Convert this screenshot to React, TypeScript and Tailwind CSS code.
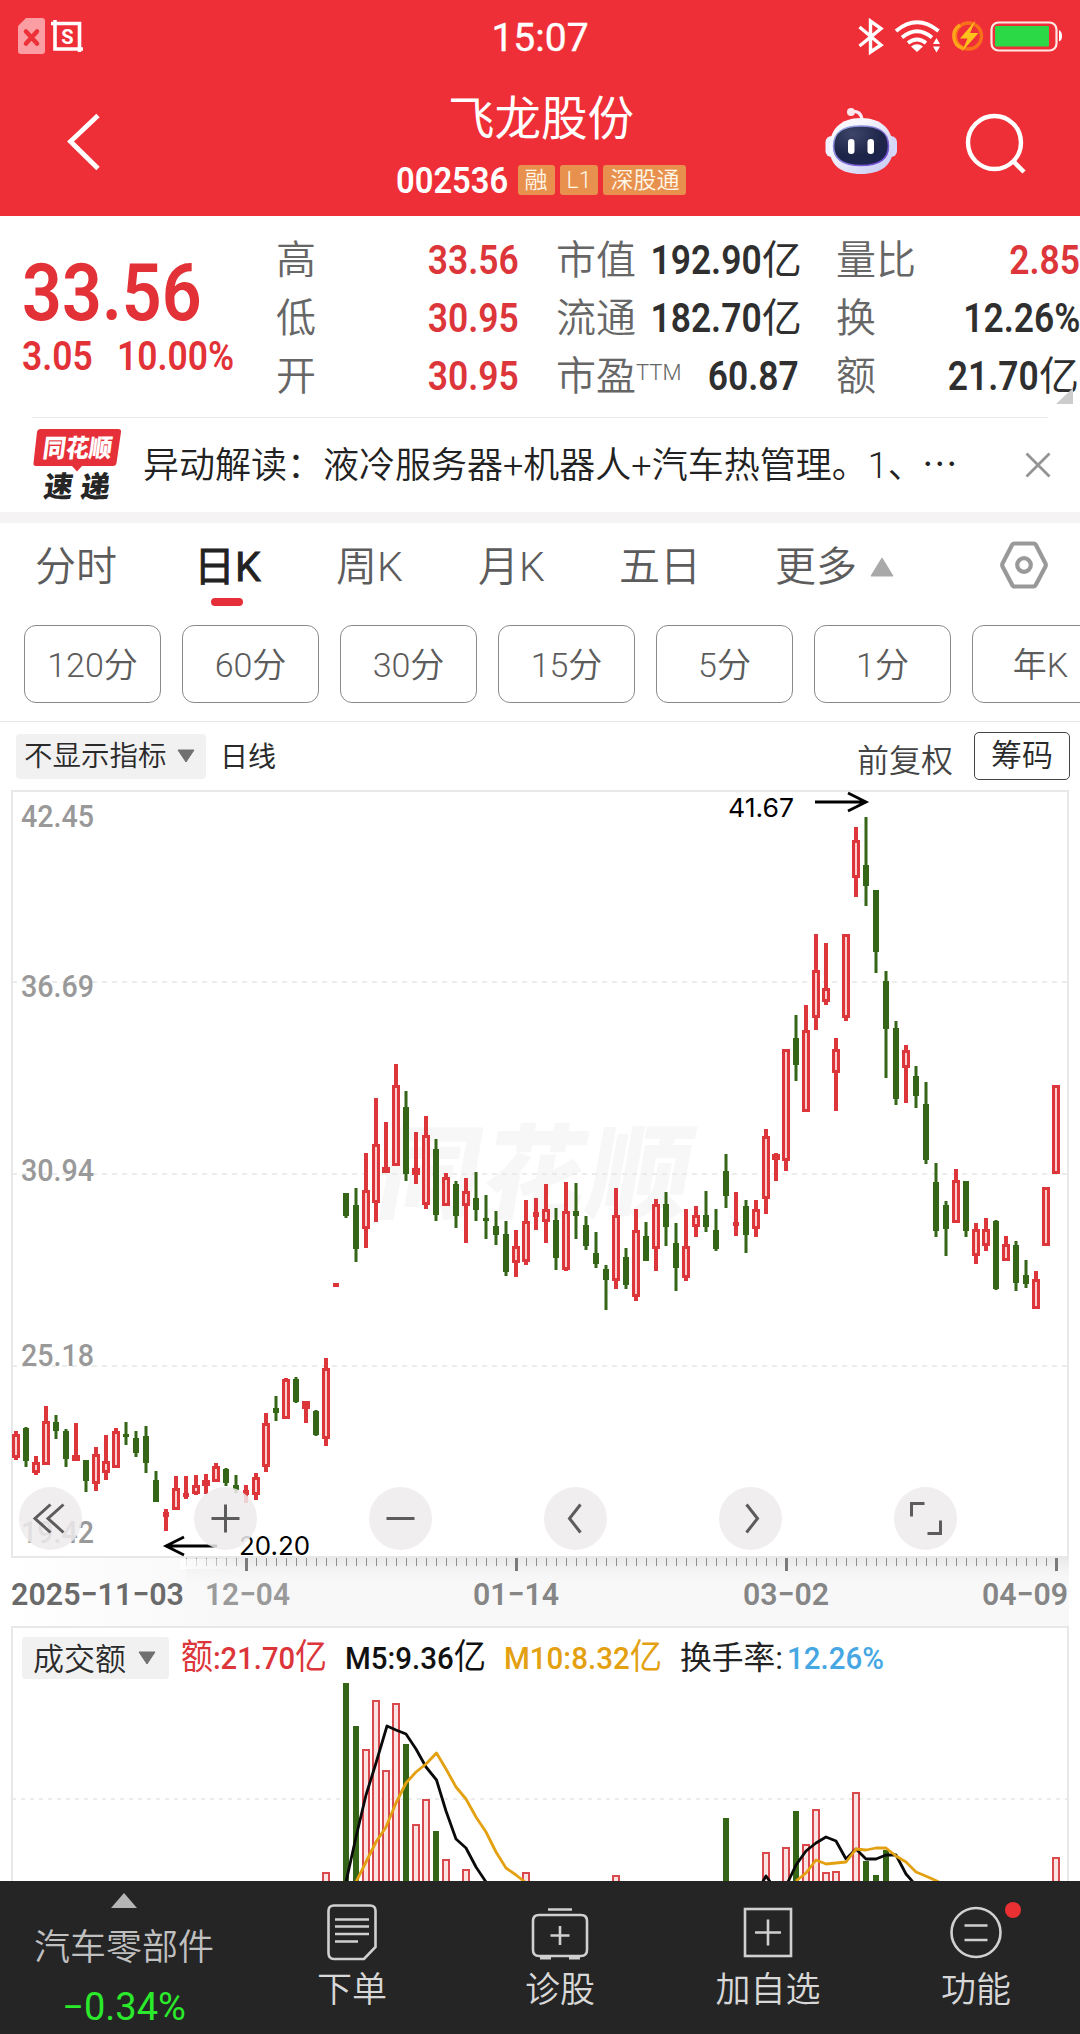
import type { ReactNode } from "react";

type Candle = ["r" | "g", number, number, number, number];

// direction, high, body top, body bottom, low (chart units)
const CANDLES: Candle[] = [
  ["r", 1431, 1434, 1458, 1460], ["g", 1427, 1428, 1461, 1467], ["r", 1456, 1462, 1473, 1475],
  ["r", 1406, 1421, 1465, 1465], ["g", 1415, 1422, 1431, 1439], ["g", 1429, 1431, 1459, 1467],
  ["r", 1423, 1455, 1461, 1461], ["g", 1460, 1460, 1481, 1492], ["r", 1447, 1454, 1484, 1491],
  ["r", 1435, 1461, 1473, 1480], ["r", 1428, 1431, 1468, 1468], ["g", 1422, 1434, 1437, 1445],
  ["g", 1431, 1438, 1453, 1457], ["g", 1426, 1436, 1463, 1473], ["g", 1471, 1480, 1502, 1502],
  ["r", 1509, 1512, 1517, 1531], ["r", 1476, 1488, 1510, 1510], ["r", 1476, 1493, 1497, 1499],
  ["r", 1475, 1485, 1494, 1495], ["r", 1474, 1480, 1486, 1494], ["r", 1463, 1466, 1482, 1482],
  ["g", 1468, 1469, 1483, 1486], ["g", 1475, 1485, 1490, 1493], ["r", 1485, 1490, 1495, 1503],
  ["r", 1473, 1477, 1495, 1500], ["r", 1413, 1423, 1467, 1472], ["g", 1396, 1408, 1413, 1421],
  ["r", 1378, 1379, 1419, 1419], ["g", 1377, 1379, 1402, 1403], ["r", 1401, 1401, 1409, 1423],
  ["g", 1410, 1411, 1435, 1436], ["r", 1358, 1368, 1439, 1446], ["r", 1283, 1283, 1287, 1287],
  ["g", 1193, 1193, 1216, 1218], ["g", 1188, 1205, 1249, 1262], ["r", 1153, 1190, 1229, 1248],
  ["r", 1098, 1144, 1203, 1222], ["r", 1122, 1167, 1173, 1173], ["r", 1064, 1085, 1166, 1166],
  ["g", 1091, 1107, 1174, 1181], ["r", 1132, 1168, 1175, 1184], ["r", 1116, 1135, 1205, 1209],
  ["g", 1139, 1149, 1215, 1221], ["r", 1173, 1177, 1206, 1206], ["g", 1181, 1184, 1216, 1228],
  ["r", 1178, 1191, 1206, 1243], ["g", 1172, 1198, 1210, 1221], ["g", 1195, 1218, 1221, 1239],
  ["g", 1211, 1226, 1235, 1245], ["g", 1221, 1234, 1272, 1276], ["r", 1230, 1246, 1263, 1277],
  ["r", 1200, 1221, 1262, 1265], ["r", 1198, 1212, 1217, 1230], ["r", 1184, 1209, 1222, 1243],
  ["g", 1208, 1220, 1258, 1270], ["r", 1182, 1211, 1270, 1271], ["g", 1183, 1211, 1216, 1239],
  ["g", 1216, 1225, 1246, 1250], ["g", 1232, 1253, 1264, 1268], ["g", 1265, 1269, 1280, 1310],
  ["r", 1188, 1215, 1281, 1289], ["g", 1248, 1257, 1285, 1289], ["r", 1209, 1230, 1297, 1301],
  ["g", 1222, 1236, 1261, 1261], ["r", 1199, 1204, 1249, 1271], ["g", 1192, 1204, 1227, 1246],
  ["g", 1223, 1243, 1268, 1291], ["r", 1209, 1246, 1278, 1281], ["r", 1206, 1215, 1227, 1237],
  ["g", 1191, 1215, 1227, 1232], ["g", 1209, 1230, 1249, 1251], ["g", 1154, 1171, 1196, 1208],
  ["r", 1192, 1222, 1226, 1236], ["g", 1200, 1206, 1235, 1253], ["r", 1200, 1209, 1229, 1237],
  ["r", 1129, 1136, 1199, 1214], ["r", 1153, 1154, 1160, 1181], ["r", 1049, 1049, 1161, 1171],
  ["g", 1015, 1038, 1065, 1081], ["r", 1005, 1030, 1112, 1112], ["r", 934, 970, 1018, 1030],
  ["r", 943, 988, 1002, 1005], ["r", 1038, 1049, 1073, 1111], ["r", 934, 934, 1018, 1021],
  ["r", 827, 840, 878, 897], ["g", 817, 865, 886, 906], ["g", 890, 890, 952, 973],
  ["g", 971, 981, 1029, 1078], ["g", 1021, 1028, 1099, 1105], ["r", 1045, 1050, 1068, 1103],
  ["g", 1066, 1076, 1096, 1108], ["g", 1082, 1104, 1160, 1164], ["g", 1163, 1182, 1231, 1237],
  ["g", 1201, 1205, 1229, 1256], ["r", 1169, 1180, 1223, 1223], ["g", 1181, 1181, 1231, 1237],
  ["r", 1223, 1229, 1256, 1264], ["r", 1218, 1229, 1246, 1251], ["g", 1220, 1221, 1289, 1290],
  ["r", 1236, 1244, 1261, 1261], ["g", 1241, 1245, 1283, 1291], ["g", 1260, 1275, 1284, 1288],
  ["r", 1271, 1279, 1309, 1309], ["r", 1187, 1187, 1246, 1246], ["r", 1085, 1085, 1174, 1174],
];

const VOLUME: ["r" | "g", number, number][] = [
  ["r", 326, 1872], ["g", 346, 1683], ["g", 356, 1726], ["r", 366, 1749], ["r", 376, 1700],
  ["r", 386, 1770], ["r", 396, 1703], ["g", 406, 1744], ["r", 416, 1824], ["r", 426, 1799],
  ["g", 436, 1831], ["r", 446, 1859], ["r", 466, 1869], ["r", 526, 1872], ["r", 616, 1875],
  ["g", 726, 1818], ["r", 766, 1852], ["r", 786, 1847], ["g", 796, 1811], ["r", 806, 1844],
  ["r", 816, 1809], ["r", 826, 1872], ["r", 836, 1871], ["r", 856, 1792], ["g", 866, 1861],
  ["g", 876, 1875], ["g", 886, 1850], ["r", 1056, 1857],
];

const M5 = [
  "346,1882 356,1837 366,1795 376,1763 387,1726 396,1730 406,1734 416,1749 426,1767 436.500,1780 446,1811 456,1839 466,1848 476,1867 486,1882",
  "762,1883 766,1876 771,1883",
  "788,1882 796,1865 806,1851 816,1843 826,1837 836,1841 846,1859 856,1849 866,1859 876,1859 886,1855 896,1855 906,1874 913,1882",
];
const M10 = [
  "356,1882 366,1862 376,1842 386,1827 396,1803 406,1783 416,1772 426,1764 436.500,1753 446,1769 456,1787 466,1799 476,1817 486,1832 496,1852 506,1868 516,1875 525,1882",
  "796,1881 806,1873 816,1860 826,1864 836,1863 846,1862 856,1849 866,1850 876,1848 886,1848 896,1856 906,1862 916,1872 928,1877 939,1882",
];

const RED = "#dc363a";
const GREEN = "#356516";
const NUM = "Roboto, 'Noto Sans CJK SC', sans-serif";

function CandleMark({ c, x }: { c: Candle; x: number }) {
  const [dir, high, top, bottom, low] = c;
  if (dir === "g") {
    return (
      <g fill={GREEN}>
        <rect x={x - 1.5} y={high} width={3} height={low - high} />
        <rect x={x - 3} y={top} width={6} height={bottom - top} />
      </g>
    );
  }
  const h = bottom - top;
  return (
    <g fill={RED}>
      {high < top && <rect x={x - 2} y={high} width={4} height={top - high} />}
      {low > bottom && <rect x={x - 2} y={bottom} width={4} height={low - bottom} />}
      <rect x={h < 6 ? x - 3 : x - 4} y={top} width={h < 6 ? 6 : 8} height={h} />
      {h > 8 && <rect x={x - 1} y={top + 3} width={2} height={h - 6} fill="#f9cfcf" />}
    </g>
  );
}

function PriceChart() {
  const ticks = Array.from({ length: 88 }, (_, i) => 186 + i * 10);
  return (
    <svg className="block h-[836px] w-[1080px]" viewBox="0 790 1080 836">
      <defs>
        <linearGradient id="axisFade" x1="0" x2="1" y1="0" y2="0">
          <stop offset="0" stopColor="#f7f7f7" stopOpacity="0" />
          <stop offset="0.2" stopColor="#f7f7f7" stopOpacity="0.9" />
          <stop offset="1" stopColor="#f8f8f8" />
        </linearGradient>
        <linearGradient id="axisShade" x1="0" x2="0" y1="0" y2="1">
          <stop offset="0" stopColor="#e9e9e9" />
          <stop offset="1" stopColor="#f8f8f8" stopOpacity="0" />
        </linearGradient>
        <linearGradient id="tickFade" gradientUnits="userSpaceOnUse" x1="180" x2="250" y1="0" y2="0">
          <stop offset="0" stopColor="#fff" stopOpacity="0.85" />
          <stop offset="1" stopColor="#fff" stopOpacity="0" />
        </linearGradient>
      </defs>
      <rect x="12" y="1558" width="1057" height="68" fill="url(#axisFade)" />
      <rect x="186" y="1558" width="883" height="28" fill="url(#axisShade)" />
      <g stroke="#e8e8e8" strokeWidth="2" fill="none">
        <rect x="12" y="791" width="1056" height="766" />
      </g>
      <text x="375" y="1210" fontSize="102" fontWeight="900" fill="#f7f7f7" textLength="312" transform="translate(212 0) skewX(-10)" fontFamily="'Noto Sans CJK SC', sans-serif">同花顺</text>
      <g stroke="#e6e6e6" strokeWidth="1.5" strokeDasharray="5 5">
        <line x1="12" x2="1068" y1="982" y2="982" />
        <line x1="12" x2="1068" y1="1174" y2="1174" />
        <line x1="12" x2="1068" y1="1366" y2="1366" />
      </g>
      <g fontFamily={NUM} fontSize="32" fontWeight="500" fill="#999">
        <text x="21" y="827" textLength="73" lengthAdjust="spacingAndGlyphs">42.45</text>
        <text x="21" y="997" textLength="73" lengthAdjust="spacingAndGlyphs">36.69</text>
        <text x="21" y="1181" textLength="73" lengthAdjust="spacingAndGlyphs">30.94</text>
        <text x="21" y="1366" textLength="73" lengthAdjust="spacingAndGlyphs">25.18</text>
        <text x="21" y="1543" textLength="73" lengthAdjust="spacingAndGlyphs">19.42</text>
      </g>
      {CANDLES.map((c, i) => <CandleMark key={i} c={c} x={16 + i * 10} />)}
      <g stroke="#000" strokeWidth="2.8" fill="none">
        <path d="M815 802H865M848 793L866 802L848 811" />
        <path d="M217 1546H167M184 1537L166 1546L184 1555" />
      </g>
      <g fontFamily="Inter, sans-serif" fontSize="26" fill="#000">
        <text x="728" y="817" textLength="66" lengthAdjust="spacingAndGlyphs">41.67</text>
        <text x="239" y="1555" textLength="71" lengthAdjust="spacingAndGlyphs">20.20</text>
      </g>
      {ticks.map((x) => {
        const major = (x - 246) % 270 === 0;
        return <rect key={x} x={major ? x - 1 : x} y={1558} width={major ? 3 : 1} height={major ? 13 : 8} fill={major ? "#7a7a7a" : "#8f8f8f"} />;
      })}
      <rect x="180" y="1559" width="60" height="10" fill="url(#tickFade)" />
      <g fontFamily={NUM} fontSize="32" fontWeight="600" fill="#868686">
        <text x="11" y="1605" fill="#6a6a6a" textLength="173" lengthAdjust="spacingAndGlyphs">2025−11−03</text>
        <text x="205" y="1605" fill="#9a9a9a" textLength="85" lengthAdjust="spacingAndGlyphs">12−04</text>
        <text x="473" y="1605" textLength="86" lengthAdjust="spacingAndGlyphs">01−14</text>
        <text x="743" y="1605" textLength="86" lengthAdjust="spacingAndGlyphs">03−02</text>
        <text x="982" y="1605" textLength="86" lengthAdjust="spacingAndGlyphs">04−09</text>
      </g>
    </svg>
  );
}

function VolumeChart() {
  return (
    <svg className="block h-[199px] w-[1080px]" viewBox="0 1682 1080 199">
      <path d="M12 1682V1881M1068 1682V1881" stroke="#e8e8e8" strokeWidth="2" />
      <line x1="12" x2="1068" y1="1799" y2="1799" stroke="#e6e6e6" strokeWidth="1.5" strokeDasharray="4 5" />
      {VOLUME.map(([dir, x, y]) =>
        dir === "g" ? (
          <rect key={x} x={x - 3} y={y} width={6} height={1890 - y} fill={GREEN} />
        ) : (
          <rect key={x} x={x - 3} y={y + 1} width={6} height={1890 - y} fill="#fbe3e3" stroke="#d9484c" strokeWidth={2} />
        )
      )}
      <g fill="none" strokeWidth="2.8" strokeLinejoin="round">
        {M5.map((p) => <polyline key={p} points={p} stroke="#0a0a0a" />)}
        {M10.map((p) => <polyline key={p} points={p} stroke="#e3a010" />)}
      </g>
    </svg>
  );
}

function StatusBar() {
  return (
    <div className="relative flex h-[72px] items-center justify-between">
      <svg className="ml-[16px] h-[40px] w-[72px]" viewBox="16 16 72 40" fill="none">
        <path d="M26 18H42Q45 18 45 21V51Q45 54 42 54H21Q18 54 18 51V26Z" fill="#fb9ea3" />
        <path d="M26 31.500L37 43.500M37 31.500L26 43.500" stroke="#ee3038" strokeWidth="4.500" strokeLinecap="round" />
        <path d="M51 23.500H79.500V52M55 20V49H83" stroke="#fff" strokeWidth="3.600" />
        <text x="67.300" y="43.500" textAnchor="middle" fontSize="20" fontWeight="700" fill="#fff" fontFamily="Roboto, sans-serif">S</text>
      </svg>
      <div className="absolute inset-x-0 top-[11px] text-center text-[39px] leading-[54px] text-white [-webkit-text-stroke:0.4px_white]">15:07</div>
      <svg className="mr-[14px] h-[40px] w-[214px]" viewBox="852 16 214 40" fill="none">
        <path d="M859.500 27L881 45L870.500 52V21L881 28.500L859.500 46" stroke="#fff" strokeWidth="3.400" />
        <g stroke="#fff" strokeWidth="3.800">
          <path d="M896 31Q917 13.500 938.500 31" />
          <path d="M902 37.500Q917 25 932 37.500" />
          <path d="M908 43Q917 36 926 43" />
        </g>
        <path d="M911 46.500Q917 42 923 46.500L917 52Z" fill="#fff" />
        <path d="M933 44L936.500 38L940 44ZM933 46.500L936.500 52.500L940 46.500Z" fill="#fff" />
        <circle cx="968.500" cy="36" r="13" stroke="#f8701a" strokeWidth="3.400" />
        <path d="M960 25A13 13 0 0 0 963 48.500" stroke="#ffa51a" strokeWidth="3.400" />
        <path d="M975.500 20.500L960 38.500H967.500L962 51.500L978.500 33H970Z" fill="#ffc21c" />
        <rect x="991.500" y="22.500" width="65" height="28" rx="7" stroke="#ffe9e6" strokeWidth="2.200" />
        <rect x="995" y="26" width="54" height="20.500" rx="1" fill="#2bd846" />
        <path d="M1059 30Q1062 31.500 1062 36T1059 41.500Z" fill="#fff" />
      </svg>
    </div>
  );
}

function Robot() {
  return (
    <svg className="h-[70px] w-[76px]" viewBox="823 107 76 70" fill="none">
      <defs>
        <linearGradient id="shell" x1="0" x2="1" y1="0" y2="1">
          <stop offset="0.3" stopColor="#f7f7fd" />
          <stop offset="1" stopColor="#c3c5f2" />
        </linearGradient>
        <linearGradient id="rim" x1="0" x2="1" y1="0" y2="1">
          <stop offset="0" stopColor="#9fb4e6" />
          <stop offset="1" stopColor="#6a3ccf" />
        </linearGradient>
        <radialGradient id="visor" cx="0.35" cy="0.2" r="0.9">
          <stop offset="0" stopColor="#3d4568" />
          <stop offset="0.6" stopColor="#1d2548" />
          <stop offset="1" stopColor="#1c2350" />
        </radialGradient>
      </defs>
      <path d="M851 111.500Q861 110 862 120" stroke="#fbe9f3" strokeWidth="3.200" />
      <circle cx="851" cy="112" r="4" fill="#fde6ec" />
      <rect x="825.500" y="136" width="12" height="21" rx="6" fill="#f0f0ff" />
      <rect x="885" y="136" width="12" height="21" rx="6" fill="#d5d6fa" />
      <path d="M861 118C882 118 893 130 893 148C893 165 881 174 861 174C841 174 829.500 165 829.500 148C829.500 130 840 118 861 118Z" fill="url(#shell)" />
      <path d="M861 126C878 126 888.500 131 888.500 146C888.500 160 878 165.500 861 165.500C844 165.500 833.500 160 833.500 146C833.500 131 844 126 861 126Z" fill="url(#visor)" stroke="url(#rim)" strokeWidth="1.600" />
      <rect x="848" y="139" width="6.500" height="15" rx="3.200" fill="#fff" />
      <rect x="867.500" y="139" width="6.500" height="15" rx="3.200" fill="#fff" />
    </svg>
  );
}

function Tag({ children }: { children: ReactNode }) {
  return <span className="flex h-[30px] items-center rounded-[3px] bg-[#e8914e] px-[7px] text-[23px] font-[350] leading-none text-[#fff7e8]">{children}</span>;
}

function Header() {
  return (
    <header className="h-[216px] bg-[#ef2f37]">
      <StatusBar />
      <div className="flex h-[144px] items-start justify-between pl-[62px] pr-[50px]">
        <svg className="mt-[38px] h-[64px] w-[200px]" viewBox="61 110 200 64" fill="none">
          <path d="M97 115.500L69.500 141.500L97 168.500" stroke="#fff" strokeWidth="4.800" />
        </svg>
        <div className="-ml-[3px] flex flex-col items-center">
          <h1 className="mt-[17px] text-[46.5px] leading-[60px] text-white">飞龙股份</h1>
          <div className="mt-[9px] flex h-[44px] items-center gap-[5px]">
            <div className="mr-[5px] flex w-[112px] items-center text-white"><Num className="text-[37px]">002536</Num></div>
            <Tag>融</Tag>
            <Tag>L1</Tag>
            <Tag>深股通</Tag>
          </div>
        </div>
        <div className="flex items-start">
          <div className="mr-[62px] mt-[35px]"><Robot /></div>
          <svg className="mt-[38px] h-[70px] w-[69px]" viewBox="961 110 69 70" fill="none">
            <circle cx="994.500" cy="142.500" r="26.500" stroke="#fff" strokeWidth="4.400" />
            <path d="M1013 161L1024 172" stroke="#fff" strokeWidth="4.500" />
          </svg>
        </div>
      </div>
    </header>
  );
}

function Num({ children, right, className = "" }: { children: ReactNode; right?: boolean; className?: string }) {
  return (
    <span className={`inline-block whitespace-nowrap font-semibold leading-none scale-x-[0.885] ${right ? "origin-right" : "origin-left"} ${className}`}>
      {children}
    </span>
  );
}

function Stat({ label, sup, value, tone = "text-[#2f2f2f]", unit }: { label: string; sup?: string; value: string; tone?: string; unit?: boolean }) {
  return (
    <div className="flex h-[58px] items-center justify-between">
      <div className="relative whitespace-nowrap text-[40px] font-[350] leading-none text-[#666]">
        {label}
        {sup && <span className="absolute left-full top-[5px] text-[22px] leading-none">{sup}</span>}
      </div>
      <div className={`flex items-center text-[40px] ${tone}`}>
        <Num right>{value}</Num>
        {unit && <span className="-mr-[1px] w-[42px] whitespace-nowrap text-[40px] leading-none">亿</span>}
      </div>
    </div>
  );
}

function Quote() {
  return (
    <section className="flex h-[201px] pt-[16px]">
      <div className="w-[276px] pl-[22px] text-[#e23237]">
        <div className="mt-[19px] flex h-[84px] items-center"><Num className="text-[79px]">33.56</Num></div>
        <div className="flex h-[44px] items-center text-[40px]">
          <div className="flex w-[95px] items-center"><Num>3.05</Num></div>
          <Num>10.00%</Num>
        </div>
      </div>
      <div className="w-[243px]">
        <Stat label="高" value="33.56" tone="text-[#dc363b]" />
        <Stat label="低" value="30.95" tone="text-[#dc363b]" />
        <Stat label="开" value="30.95" tone="text-[#dc363b]" />
      </div>
      <div className="ml-[37px] w-[243px]">
        <Stat label="市值" value="192.90" unit />
        <Stat label="流通" value="182.70" unit />
        <Stat label="市盈" sup="TTM" value="60.87" />
      </div>
      <div className="relative ml-[37px] w-[244px]">
        <Stat label="量比" value="2.85" tone="text-[#dc363b]" />
        <Stat label="换" value="12.26%" />
        <Stat label="额" value="21.70" unit />
        <svg className="absolute right-[7px] top-[156px] h-[16px] w-[17px]" viewBox="0 0 17 16"><path d="M17 0V16H0Z" fill="#ccc" /></svg>
      </div>
    </section>
  );
}

function News() {
  return (
    <section className="mx-[32px] flex h-[95px] items-center border-t border-[#e8e8e8]">
      <svg className="h-[76px] w-[90px] overflow-visible" viewBox="32 426 90 76">
        <path d="M41 428H118Q121.500 428 121 431L116.500 462Q116 465 113 465H82L77 470.500L72 465H36Q33 465 33.500 462L37 431Q37.500 428 41 428Z" fill="#e5303a" />
        <g fontFamily="'Noto Sans CJK SC', sans-serif" fontWeight="900">
          <text x="42" y="456" fontSize="25" fill="#fff" textLength="69" lengthAdjust="spacingAndGlyphs" transform="translate(60 0) skewX(-7.500)">同花顺</text>
          <text x="42" y="496" fontSize="29" fill="#262626" textLength="66" lengthAdjust="spacing" transform="translate(66 0) skewX(-7.500)">速递</text>
        </g>
      </svg>
      <p className="ml-[21px] w-[882px] shrink-0 whitespace-nowrap pt-[2px] text-[36px] font-[350] leading-none text-[#222]">
        异动解读：液冷服务器+机器人+汽车热管理。1、<span className="-ml-[2px]">⋯</span>
      </p>
      <svg className="-mr-[6px] h-[26px] w-[26px] shrink-0" viewBox="0 0 26 26"><path d="M1.500 1.500L24.500 24.500M24.500 1.500L1.500 24.500" stroke="#949494" strokeWidth="2.800" /></svg>
    </section>
  );
}

function Tabs() {
  return (
    <nav className="flex h-[102px] items-start text-[41px] font-[350] leading-[60px] text-[#5c5c5c]">
      <div className="ml-[35px] mt-[14px] w-[159px]">分时</div>
      <div className="mt-[14px] w-[142px] font-normal text-[#222] [-webkit-text-stroke:0.8px_#222]">
        日K
        <div className="ml-[17px] mt-[1px] h-[8px] w-[32px] rounded-full bg-[#e5303a]" />
      </div>
      <div className="mt-[14px] w-[142px]">周K</div>
      <div className="mt-[14px] w-[141px]">月K</div>
      <div className="mt-[14px] w-[156px]">五日</div>
      <div className="mt-[14px] flex w-[224px] items-center">
        更多
        <svg className="ml-[13px] h-[20px] w-[24px]" viewBox="0 0 24 20"><path d="M12 1L23 19H1Z" fill="#a9a9a9" stroke="#a9a9a9" strokeLinejoin="round" /></svg>
      </div>
      <svg className="mt-[17px] h-[50px] w-[50px]" viewBox="0 0 50 50" fill="none" stroke="#999">
        <path d="M15.500 3.500H34.500Q36 3.500 37 5L46.500 23.500Q47 25 46.500 26.500L37 44.500Q36 46.500 34.500 46.500H15.500Q14 46.500 13 44.500L3.500 26.500Q3 25 3.500 23.500L13 5Q14 3.500 15.500 3.500Z" strokeWidth="4.200" />
        <circle cx="25" cy="25" r="6.800" strokeWidth="4.200" />
      </svg>
    </nav>
  );
}

function Periods() {
  return (
    <div className="flex h-[97px] gap-[21px] overflow-hidden border-b border-[#e6e6e6] pl-[24px]">
      {["120分", "60分", "30分", "15分", "5分", "1分", "年K"].map((p) => (
        <div key={p} className="flex h-[78px] w-[137px] shrink-0 items-center justify-center rounded-[12px] border border-[#8a8a8a] pt-[2px] text-[34px] font-[350] text-[#5c5c5c]">{p}</div>
      ))}
    </div>
  );
}

function Caret() {
  return <svg className="h-[14px] w-[18px] shrink-0" viewBox="0 0 18 14"><path d="M1 1H17L9 13Z" fill="#707070" stroke="#707070" strokeLinejoin="round" /></svg>;
}

function IndicatorRow() {
  return (
    <div className="flex h-[68px] items-center pl-[16px] pr-[10px] text-[#2a2a2a]">
      <div className="flex h-[45px] w-[190px] items-center justify-between rounded-[4px] bg-[#f1f1f1] pl-[8px] pr-[11px]">
        <span className="whitespace-nowrap pt-[3px] text-[28.5px] font-[350]">不显示指标</span>
        <Caret />
      </div>
      <div className="ml-[14px] pt-[4px] text-[28px]">日线</div>
      <div className="ml-auto mt-[9px] text-[32px] font-[350] text-[#444]">前复权</div>
      <div className="ml-[21px] flex h-[48px] w-[96px] items-center justify-center rounded-[5px] border border-[#444] pt-[1px] text-[31px] font-[350]">筹码</div>
    </div>
  );
}

function ZoomControls() {
  const icons = [
    "M22.500 -14L7 0L22.500 14 M9.500 -14L-6 0L9.500 14",
    "M-14 0H14M0 -14V14",
    "M-14 0H14",
    "M5 -14L-6 0L5 14",
    "M-4 -14L7 0L-4 14",
    "M-14 -2V-15H-1M15 2V15H2",
  ];
  return (
    <div className="absolute left-[19px] top-[697px] flex gap-[112px]">
      {icons.map((d, i) => (
        <div key={i} className="h-[63px] w-[63px] rounded-full bg-[#eeebed]/85">
          <svg className="h-[63px] w-[63px]" viewBox={i === 0 ? "-22 -31.500 63 63" : "-31.500 -31.500 63 63"} fill="none">
            <path d={d} stroke="#5c5c5c" strokeWidth="3" />
          </svg>
        </div>
      ))}
    </div>
  );
}

function VolumeHeader() {
  return (
    <div className="mx-[11px] flex h-[56px] items-center border-x-2 border-t-2 border-[#e8e8e8] pl-[9px] text-[32px] leading-none">
      <div className="mt-[6px] flex h-[42px] w-[147px] items-center justify-between rounded-[4px] bg-[#f1f1f1] pl-[11px] pr-[13px] text-[#2a2a2a]">
        <span className="whitespace-nowrap pt-[3px] text-[31px] font-[350] leading-none">成交额</span>
        <Caret />
      </div>
      <svg className="mt-[6px] h-[44px] w-[720px]" viewBox="169 1636 720 44" fontFamily={NUM} fontSize="32" fontWeight="500">
        <text x="181" y="1669" fill="#dc363b" textLength="146" lengthAdjust="spacingAndGlyphs">
          <tspan fontSize="35" fontWeight="400">额</tspan>:21.70<tspan fontSize="35" fontWeight="400">亿</tspan>
        </text>
        <text x="345" y="1669" fill="#111" textLength="141" lengthAdjust="spacingAndGlyphs">
          M5:9.36<tspan fontSize="35" fontWeight="400">亿</tspan>
        </text>
        <text x="504" y="1669" fill="#e3a010" textLength="158" lengthAdjust="spacingAndGlyphs">
          M10:8.32<tspan fontSize="35" fontWeight="400">亿</tspan>
        </text>
        <text x="680" y="1669" fontSize="31.500" fontWeight="400" fill="#222" textLength="103" lengthAdjust="spacingAndGlyphs">换手率:</text>
        <text x="787" y="1669" textLength="97" lengthAdjust="spacingAndGlyphs" fill="#46a7e3">12.26%</text>
      </svg>
    </div>
  );
}

function NavItem({ label, dot, children }: { label: string; dot?: boolean; children: ReactNode }) {
  return (
    <div className="flex w-[208px] flex-col items-center pt-[20px]">
      <div className="relative">
        <svg className="h-[62px] w-[62px]" viewBox="-31 -31 62 62" fill="none" stroke="#d0d0d0" strokeWidth="2.600">{children}</svg>
        {dot && <span className="absolute -right-[14px] top-[1px] h-[16px] w-[16px] rounded-full bg-[#ea3033]" />}
      </div>
      <div className="mt-[3px] text-[35px] font-[350] leading-[50px] text-[#d8d8d8]">{label}</div>
    </div>
  );
}

function BottomNav() {
  return (
    <footer className="flex h-[153px] bg-[#252525]">
      <div className="flex w-[248px] flex-col items-center pt-[12px]">
        <svg className="h-[15px] w-[26px]" viewBox="0 0 26 15"><path d="M13 0L26 15H0Z" fill="#b5b5b5" /></svg>
        <div className="mt-[13px] text-[36px] font-[350] leading-[54px] text-[#c0c0c0]">汽车零部件</div>
        <div className="mt-[5px] text-[38px] leading-[54px] text-[#2bea2b]">−0.34%</div>
      </div>
      <NavItem label="下单">
        <path d="M-18 -26.500H18Q23.500 -26.500 23.500 -21V15L12 27H-18Q-23.500 27 -23.500 21V-21Q-23.500 -26.500 -18 -26.500Z" />
        <path d="M-17 -12.500H17M-17 -5.500H17M-17 2H17M-17 9.500H6" />
      </NavItem>
      <NavItem label="诊股">
        <path d="M-21 -17H21Q27 -17 27 -11V18Q27 24 21 24H-21Q-27 24 -27 18V-11Q-27 -17 -21 -17Z" />
        <path d="M-12 -22.500H12M0 -6V13M-9.500 3.500H9.500" />
        <path d="M-20 25.500H-9M9 25.500H20" strokeWidth="4" />
      </NavItem>
      <NavItem label="加自选">
        <rect x="-23" y="-23" width="46" height="47" />
        <path d="M-13 0.500H13M0 -12.500V13.500" />
      </NavItem>
      <NavItem label="功能" dot>
        <circle cx="0" cy="0.500" r="24.500" />
        <path d="M-11.500 -6.500H11.500M-11.500 8H11.500" />
      </NavItem>
    </footer>
  );
}

export default function App() {
  return (
    <div className="h-[2034px] w-[1080px] overflow-hidden bg-white font-[Roboto,'Noto_Sans_CJK_SC',sans-serif]">
      <Header />
      <Quote />
      <News />
      <div className="h-[11px] bg-[#f5f3f4]" />
      <Tabs />
      <Periods />
      <IndicatorRow />
      <div className="relative">
        <PriceChart />
        <ZoomControls />
      </div>
      <VolumeHeader />
      <VolumeChart />
      <BottomNav />
    </div>
  );
}
